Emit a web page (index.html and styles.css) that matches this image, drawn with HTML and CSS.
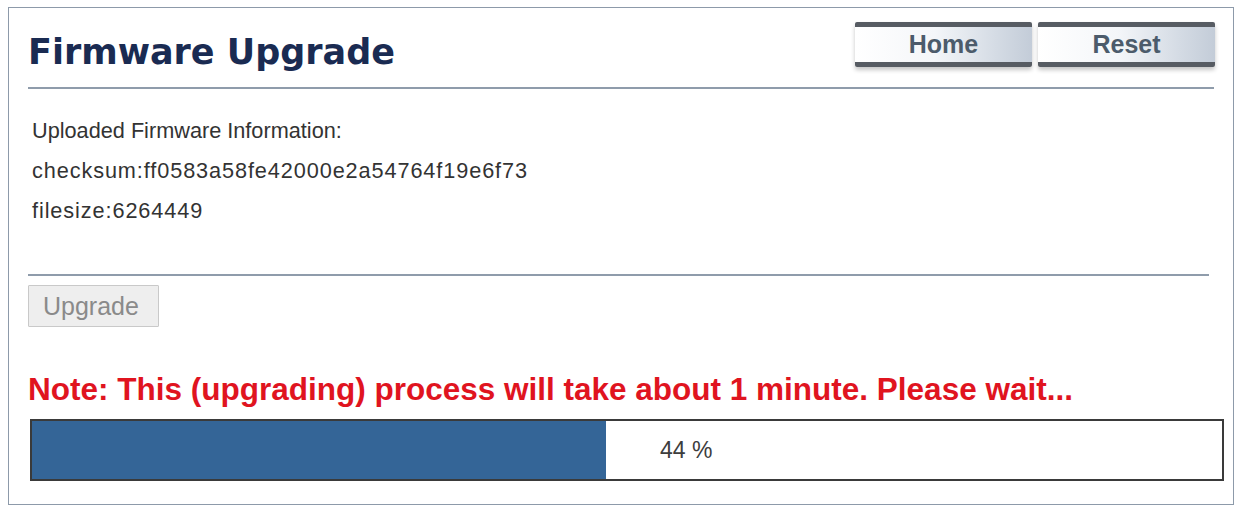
FILE: index.html
```html
<!DOCTYPE html>
<html lang="en">
<head>
<meta charset="utf-8">
<title>Firmware Upgrade</title>
<link rel="stylesheet" href="styles.css">
</head>
<body>
<div class="panel">
  <div class="panel-head">
    <h1 class="title">Firmware Upgrade</h1>
    <div class="nav">
      <button class="nav-btn" type="button">Home</button>
      <button class="nav-btn" type="button">Reset</button>
    </div>
  </div>
  <hr class="rule rule-head">
  <div class="info">
    <div class="info-line">Uploaded Firmware Information:</div>
    <div class="info-line info-value">checksum:ff0583a58fe42000e2a54764f19e6f73</div>
    <div class="info-line info-value">filesize:6264449</div>
  </div>
  <hr class="rule rule-body">
  <button class="upgrade-btn" type="button" disabled>Upgrade</button>
  <p class="note">Note: This (upgrading) process will take about 1 minute. Please wait...</p>
  <div class="progress">
    <div class="progress-fill" style="width: 574px"></div>
    <div class="progress-label">44 %</div>
  </div>
</div>
</body>
</html>
```

FILE: styles.css
```css
html, body {
  margin: 0;
  padding: 0;
  background: #ffffff;
}

body {
  padding: 7px 0 0 8px;
  font-family: "Liberation Sans", Arial, sans-serif;
}

.panel {
  box-sizing: border-box;
  width: 1226px;
  height: 498px;
  border: 1px solid #8d9aaa;
  padding: 0 9px 0 19px;
  background: #fff;
}

.panel-head {
  display: flex;
  justify-content: space-between;
  align-items: flex-start;
  padding-top: 14px;
  margin-right: 9px;
  height: 65px;
}

.title {
  margin: 10px 0 0 0;
  font-family: "DejaVu Sans", Verdana, sans-serif;
  font-weight: bold;
  font-size: 35px;
  line-height: 40px;
  color: #1a2b52;
}

.nav {
  display: flex;
  gap: 6px;
}

.nav-btn {
  box-sizing: border-box;
  width: 177px;
  height: 45px;
  padding: 0;
  border: none;
  border-top: 5px solid #575c63;
  border-bottom: 5px solid #575c63;
  border-radius: 2px;
  background: linear-gradient(to right, #ffffff 0%, #f4f6f9 45%, #d4dbe4 80%, #c3ccd8 100%);
  box-shadow: 0 3px 4px rgba(0, 0, 0, 0.22);
  font-family: "Liberation Sans", Arial, sans-serif;
  font-weight: bold;
  font-size: 25px;
  color: #4c5b6b;
  line-height: 33px;
}

.rule {
  margin: 0;
  height: 2px;
  border: none;
  background: #8f9cab;
}

.rule-head {
  margin-right: 10px;
}

.info {
  padding: 22px 0 0 4px;
  font-size: 21.7px;
  line-height: 40px;
  color: #333333;
}

.info-value {
  letter-spacing: 0.9px;
}

.rule-body {
  margin-top: 43px;
  margin-right: 15px;
}

.upgrade-btn {
  display: block;
  box-sizing: border-box;
  width: 131px;
  height: 42px;
  margin-top: 9px;
  padding: 0 0 0 14px;
  text-align: left;
  border: 1px solid #c9c9c9;
  border-radius: 1px;
  background: #eeeeee;
  font-family: "Liberation Sans", Arial, sans-serif;
  font-size: 25px;
  color: #8a8a8a;
}

.note {
  margin: 44px 0 0 0;
  font-weight: bold;
  font-size: 31.5px;
  line-height: 36px;
  color: #e0141f;
  white-space: nowrap;
}

.progress {
  box-sizing: border-box;
  display: flex;
  align-items: center;
  height: 62px;
  margin: 12px 0 0 2px;
  border: 2px solid #3a3a3a;
}

.progress-fill {
  align-self: stretch;
  background: #346597;
}

.progress-label {
  padding-left: 54px;
  font-size: 23px;
  color: #3d3d3d;
}
```
